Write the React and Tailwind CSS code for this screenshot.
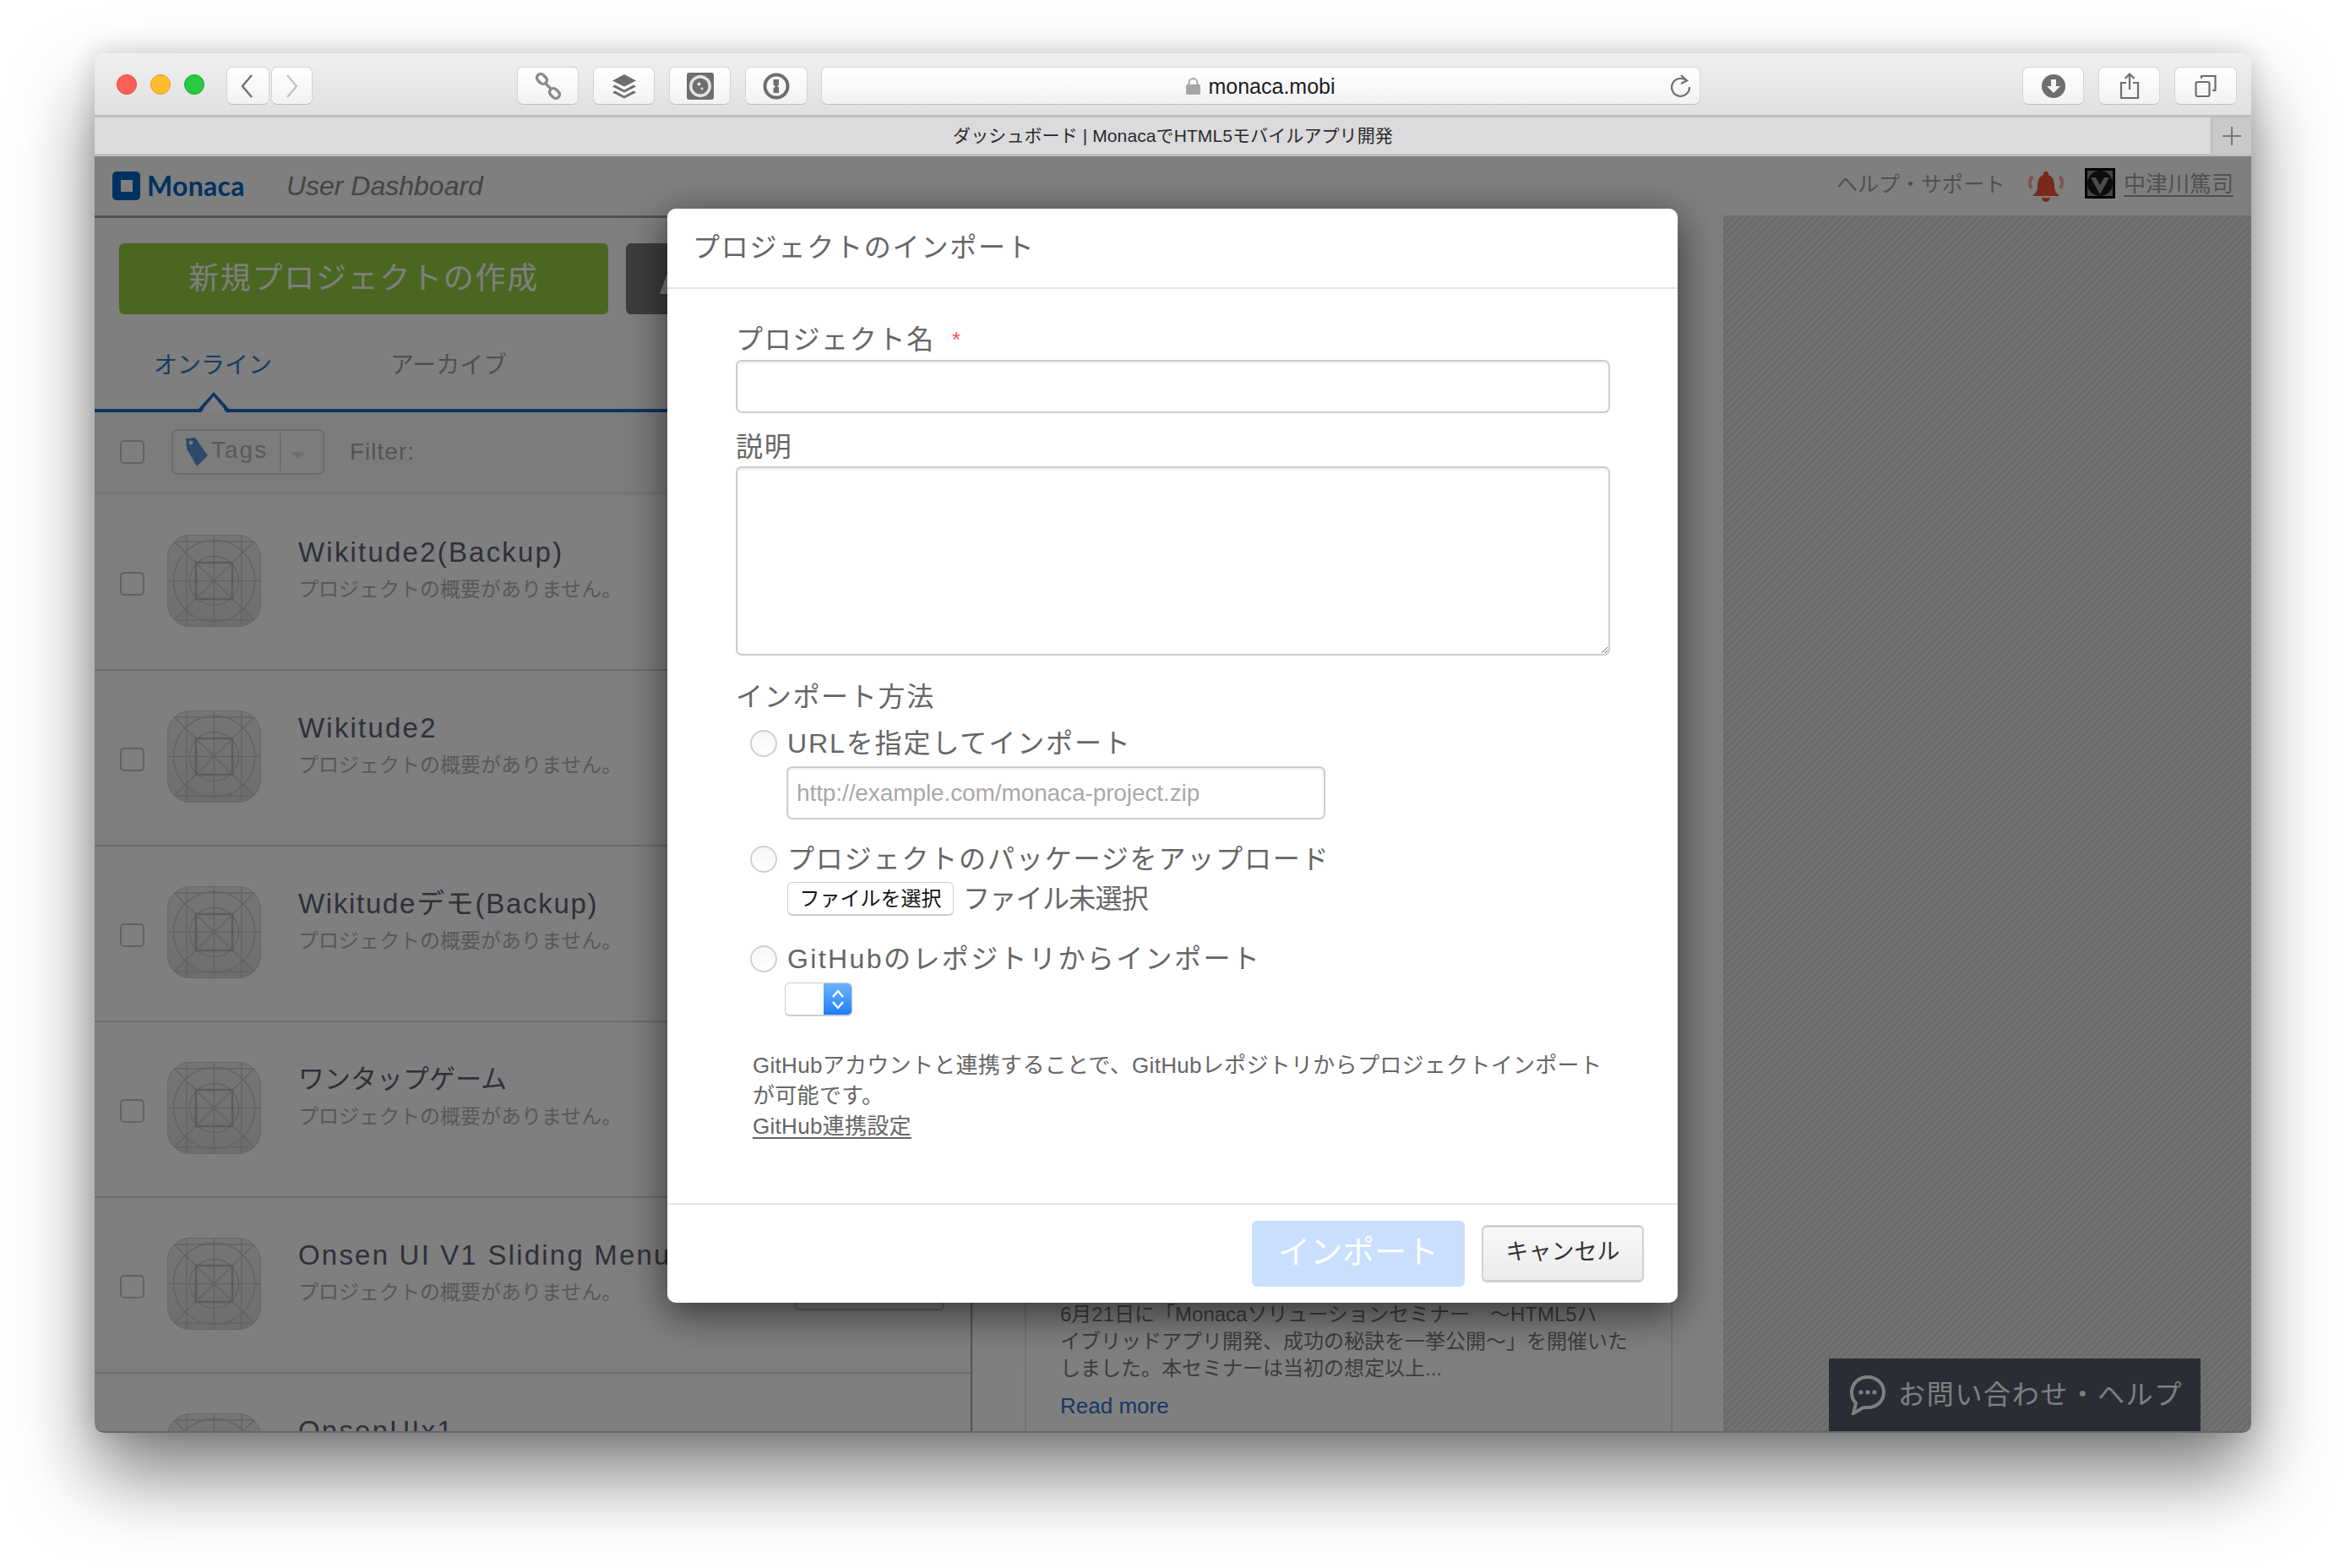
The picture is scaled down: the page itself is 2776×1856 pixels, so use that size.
import React from "react";

const projects = [
  { name: "Wikitude2(Backup)", title: "text-[33px] tracking-[2.2px]" },
  { name: "Wikitude2", title: "text-[33px] tracking-[2.2px]" },
  { name: "Wikitudeデモ(Backup)", title: "text-[33px] tracking-[1.7px]" },
  { name: "ワンタップゲーム", title: "text-[31px]" },
  { name: "Onsen UI V1 Sliding Menu", title: "text-[33px] tracking-[2.2px]" },
  { name: "OnsenUIx1", title: "text-[33px] tracking-[2.2px]" },
];

const sans = "font-['Liberation_Sans','Noto_Sans_CJK_JP',sans-serif]";
const toolBtn =
  "flex items-center justify-center h-[45px] rounded-[7px] border border-[#d4d3d5] border-b-[#bdbcbe] bg-gradient-to-b from-white to-[#f2f2f3]";
const field = "rounded-[7px] border-2 border-[#cccccc] bg-white shadow-[inset_0_2px_3px_rgba(0,0,0,0.07)]";

const ProjectIcon = () => (
  <svg width="111" height="109" viewBox="0 0 111 109" className="shrink-0">
    <defs>
      <linearGradient id="iconFill" x1="0" y1="0" x2="0" y2="1">
        <stop offset="0" stopColor="#ececec" />
        <stop offset="1" stopColor="#dcdcdc" />
      </linearGradient>
      <clipPath id="iconClip">
        <rect width="111" height="109" rx="27" />
      </clipPath>
    </defs>
    <rect width="111" height="109" rx="27" fill="url(#iconFill)" />
    <g clipPath="url(#iconClip)" fill="none" stroke="#c6c6c6" strokeWidth="1.5">
      <path d="M0 0L111 109M111 0L0 109M55.5 0V109M0 54.5H111M23 0V109M88 0V109M0 8H111M0 101H111" />
      <circle cx="55.5" cy="54.5" r="48" />
      <circle cx="55.5" cy="54.5" r="29" />
      <rect x="34" y="33" width="43" height="43" strokeWidth="2.5" stroke="#b8b8b8" />
    </g>
    <rect x="0.5" y="0.5" width="110" height="108" rx="27" fill="none" stroke="#cccccc" />
  </svg>
);

const Checkbox = () => (
  <div className="w-[29px] h-[28px] shrink-0 rounded-[5px] border-2 border-[#c4c4c4] bg-white" />
);

const Radio = () => (
  <input
    type="radio"
    name="method"
    className="appearance-none w-[32px] h-[32px] shrink-0 rounded-full border-2 border-[#cfcfcf] bg-gradient-to-b from-[#f6f6f6] to-white"
  />
);

const ProjectRow = ({ name, title }) => (
  <div className="flex items-center h-[208px] shrink-0 border-b-2 border-[#d8d8d8] pl-[30px] pr-[31px]">
    <div className="mt-[4px]">
      <Checkbox />
    </div>
    <div className="ml-[27px] -mt-[4px]">
      <ProjectIcon />
    </div>
    <div className="ml-[44px] pb-[30px] min-w-0 whitespace-nowrap">
      <div className={`${title} leading-[44px] text-[#5c6270]`}>{name}</div>
      <div className="text-[24px] leading-[36px] mt-[4px] text-[#b0b0b0]">プロジェクトの概要がありません。</div>
    </div>
    <div className="ml-auto w-[177px] h-[60px] shrink-0 rounded-[6px] border-2 border-[#c8c8c8]" />
  </div>
);

export default function App() {
  return (
    <div className={`w-[2776px] h-[1856px] bg-white pl-[112px] pt-[63px] overflow-hidden ${sans}`}>
      <div className="w-[2553px] h-[1633px] flex flex-col rounded-t-[12px] rounded-b-[10px] overflow-hidden shadow-[0_50px_90px_rgba(0,0,0,0.5),0_0_30px_rgba(0,0,0,0.16)]">
        {/* toolbar */}
        <div className="h-[76px] shrink-0 flex items-start pt-[16px] pl-[26px] bg-gradient-to-b from-[#f0eff1] to-[#e0dfe1] border-b-[3px] border-[#bfbec0]">
          <div className="flex gap-[16px] mt-[9px]">
            <div className="w-[24px] h-[24px] rounded-full bg-[#ff5f57] border border-[#e2463f]" />
            <div className="w-[24px] h-[24px] rounded-full bg-[#ffbd2e] border border-[#e1a116]" />
            <div className="w-[24px] h-[24px] rounded-full bg-[#28c940] border border-[#14ae2c]" />
          </div>
          <div className={`${toolBtn} w-[51px] ml-[26px]`}>
            <svg width="16" height="30" viewBox="0 0 16 30" fill="none" stroke="#6e6e6e" strokeWidth="2.4" className="mr-[4px]">
              <path d="M14 2L3 15L14 28" />
            </svg>
          </div>
          <div className={`${toolBtn} w-[49px] ml-[2px]`}>
            <svg width="16" height="30" viewBox="0 0 16 30" fill="none" stroke="#c4c4c4" strokeWidth="2.4">
              <path d="M2 2L13 15L2 28" />
            </svg>
          </div>
          <div className={`${toolBtn} w-[73px] ml-[242px]`}>
            <svg width="32" height="32" viewBox="0 0 32 32" fill="none" stroke="#8a8a8a" strokeWidth="3.4">
              <rect x="2" y="3" width="13" height="9" rx="4.5" transform="rotate(45 8.5 7.5)" />
              <rect x="17" y="20" width="13" height="9" rx="4.5" transform="rotate(45 23.5 24.5)" />
              <path d="M12 12L20 20" />
            </svg>
          </div>
          <div className={`${toolBtn} w-[73px] ml-[17px]`}>
            <svg width="30" height="30" viewBox="0 0 30 30" fill="#6e6e6e">
              <path d="M15 1L29 8.5L15 15.5L1 8.5Z" />
              <path d="M4 13.5L15 19.5L26 13.5L29 15.5L15 22.5L1 15.5Z" />
              <path d="M4 20.5L15 26.5L26 20.5L29 22.5L15 29.5L1 22.5Z" />
            </svg>
          </div>
          <div className={`${toolBtn} w-[73px] ml-[17px]`}>
            <svg width="32" height="32" viewBox="0 0 32 32">
              <rect width="32" height="32" rx="3" fill="#6e6e6e" />
              <circle cx="16" cy="16" r="13" fill="#e4e4e4" />
              <circle cx="16" cy="16" r="9.5" fill="#6e6e6e" />
              <circle cx="14.5" cy="13.5" r="2" fill="#e4e4e4" />
              <circle cx="18" cy="19" r="1.4" fill="#e4e4e4" />
            </svg>
          </div>
          <div className={`${toolBtn} w-[74px] ml-[17px]`}>
            <svg width="32" height="32" viewBox="0 0 32 32">
              <circle cx="16" cy="16" r="13.5" fill="none" stroke="#6e6e6e" strokeWidth="4" />
              <path d="M12.5 8H19V14.5L17 16L19 17.5V24H12.5V18.5L15 16.5L12.5 14.5Z" fill="#6e6e6e" />
            </svg>
          </div>
          <div className="relative flex items-center justify-center w-[1041px] h-[45px] ml-[16px] rounded-[7px] border border-[#d4d3d5] border-b-[#bdbcbe] bg-gradient-to-b from-white to-[#f2f2f3]">
            <svg width="17" height="20" viewBox="0 0 17 20" className="mr-[9px]">
              <path d="M3.5 9V6a5 5 0 0 1 10 0v3" fill="none" stroke="#a6a6a6" strokeWidth="2" />
              <rect y="8" width="17" height="12" rx="1.5" fill="#a6a6a6" />
            </svg>
            <span className="text-[25px] text-[#1c1c1c] mt-[2px]">monaca.mobi</span>
            <svg width="28" height="28" viewBox="0 0 28 28" fill="none" stroke="#6e6e6e" strokeWidth="2.2" className="absolute right-[9px] top-[8px]">
              <path d="M21.5 7.5A10.5 10.5 0 1 0 25 15" />
              <path d="M15 1L22 7.5L15 11" />
            </svg>
          </div>
          <div className={`${toolBtn} w-[73px] ml-[381px]`}>
            <svg width="28" height="28" viewBox="0 0 28 28">
              <circle cx="14" cy="14" r="14" fill="#6e6e6e" />
              <path d="M11 6H17V14H22L14 22L6 14H11Z" fill="#f4f4f4" />
            </svg>
          </div>
          <div className={`${toolBtn} w-[73px] ml-[17px]`}>
            <svg width="24" height="32" viewBox="0 0 24 32" fill="none" stroke="#6e6e6e" strokeWidth="2.2">
              <path d="M8 12H2V30H22V12H16" />
              <path d="M12 20V2M6.5 7L12 1.5L17.5 7" />
            </svg>
          </div>
          <div className={`${toolBtn} w-[74px] ml-[17px]`}>
            <svg width="26" height="28" viewBox="0 0 26 28" fill="none" stroke="#6e6e6e" strokeWidth="2.2">
              <rect x="1.5" y="9" width="16" height="17" rx="2" />
              <path d="M8 5V2H24.5V19H21" />
            </svg>
          </div>
        </div>

        {/* tab bar */}
        <div className="relative h-[46px] shrink-0 flex items-center justify-center bg-[#dbdadc] border-b-[3px] border-[#bfbec0]">
          <span className="text-[21px] tracking-[0.1px] text-[#2a2a2a] mt-[1px]">ダッシュボード | MonacaでHTML5モバイルアプリ開発</span>
          <div className="absolute right-0 top-0 bottom-0 w-[48px] flex items-center justify-center bg-[#c9c8ca] border-l-2 border-[#bfbec0]">
            <svg width="24" height="24" viewBox="0 0 24 24" stroke="#7a7a7a" strokeWidth="2">
              <path d="M12 1V23M1 12H23" />
            </svg>
          </div>
        </div>

        {/* page under the dialog */}
        <div className="relative flex-1 flex flex-col min-h-0 bg-white border-b-2 border-[#666666]">
          <div className="h-[70px] shrink-0 flex items-center pl-[21px] pr-[21px]">
            <div className="w-[33px] h-[34px] rounded-[5px] bg-[#0064be] flex items-center justify-center">
              <div className="w-[14px] h-[14px] bg-white" />
            </div>
            <span className="ml-[8px] text-[32px] tracking-[0.3px] font-bold text-[#0064be] font-['Lato',sans-serif]">Monaca</span>
            <span className="ml-[49px] text-[32px] italic text-[#888888]">User Dashboard</span>
            <div className="ml-auto flex items-center -mt-[3px]">
              <span className="text-[25px] text-[#a0a0a0]">ヘルプ・サポート</span>
              <svg width="44" height="38" viewBox="0 0 44 38" className="ml-[26px] mt-[6px]">
                <path d="M22 0a3 3 0 0 1 3 4c6 2 7 8 7 13c0 6 3 9 6 12H6c3-3 6-6 6-12c0-5 1-11 7-13a3 3 0 0 1 3-4Z" fill="#f4553a" />
                <path d="M17 31H27A5 5 0 0 1 17 31Z" fill="#f4553a" />
                <path d="M6 6C2 10 2 16 5 20M38 6C42 10 42 16 39 20" fill="none" stroke="#f4553a" strokeWidth="4" opacity="0.5" />
              </svg>
              <div className="ml-[24px] w-[36px] h-[36px] border-[3px] border-black bg-[#888] overflow-hidden -mt-[4px]">
                <svg width="30" height="30" viewBox="0 0 30 30">
                  <circle cx="15" cy="15" r="15" fill="#1a1a1a" />
                  <path d="M4 8L15 28L26 8L20 8L15 17L10 8Z" fill="#999" />
                </svg>
              </div>
              <a className="ml-[10px] text-[26px] text-[#a0a0a0] underline underline-offset-4">中津川篤司</a>
            </div>
          </div>

          <div className="flex-1 flex min-h-0">
            {/* project list */}
            <div className="w-[1039px] shrink-0 flex flex-col overflow-hidden border-t-[3px] border-t-[#a0a0a0] border-r-2 border-r-[#a8a8a8]">
              <div className="flex gap-[21px] pt-[30px] pl-[29px] shrink-0">
                <div className="w-[579px] h-[84px] rounded-[6px] bg-[#94ce44] flex items-center justify-center text-[36px] tracking-[1.7px] text-white">
                  新規プロジェクトの作成
                </div>
                <div className="w-[200px] h-[84px] rounded-[6px] bg-[#7a7a7a] pl-[40px] pt-[30px]">
                  <svg width="20" height="30" viewBox="0 0 20 30">
                    <path d="M11 0L20 14V30H0Z" fill="#ffffff" />
                  </svg>
                </div>
              </div>
              <div className="relative h-[116px] shrink-0 flex border-b-[4px] border-[#1a6ac0] pl-[70px] pt-[41px] text-[28px] leading-[40px]">
                <span className="text-[#3474cc]">オンライン</span>
                <span className="ml-[140px] text-[#a0a0a0]">アーカイブ</span>
                <svg width="44" height="24" viewBox="0 0 44 24" className="absolute left-[119px] bottom-[-4px]">
                  <path d="M0 24H6L22 5L38 24H44V20H40L22 0L4 20H0Z" fill="#1a6ac0" />
                  <path d="M7 24L22 7L37 24Z" fill="#ffffff" />
                </svg>
              </div>
              <div className="h-[98px] shrink-0 flex items-center pl-[30px] border-b-4 border-[#eeeeee] bg-[#f8f8f8]">
                <Checkbox />
                <div className="ml-[32px] w-[181px] h-[54px] flex items-center rounded-[7px] border-2 border-[#d8d8d8]">
                  <svg width="28" height="36" viewBox="0 0 28 36" className="ml-[14px]">
                    <path d="M1 2L12 1L27 22L14 35L2 14Z" fill="#5f93d6" />
                    <circle cx="7" cy="7" r="2.4" fill="#eeeeee" />
                  </svg>
                  <span className="ml-[3px] text-[28px] tracking-[2px] text-[#b4b4b4] -mt-[5px]">Tags</span>
                  <div className="ml-[14px] w-[2px] h-[46px] bg-[#d8d8d8]" />
                  <div className="ml-[11px] mt-[8px] w-0 h-0 border-x-[9px] border-x-transparent border-t-[9px] border-t-[#dcdcdc]" />
                </div>
                <span className="ml-[30px] text-[28px] tracking-[1px] text-[#a8a8a8]">Filter:</span>
              </div>
              {projects.map((p) => (
                <ProjectRow key={p.name} name={p.name} title={p.title} />
              ))}
            </div>

            {/* news */}
            <div className="w-[889px] shrink-0 pl-[62px] pr-[60px]">
              <div className="h-full flex flex-col justify-end pb-[12px] pl-[40px] border-x-2 border-[#e4e4e4]">
                <p className="text-[24px] leading-[32px] text-[#7a7a7a] whitespace-nowrap">
                  6月21日に「Monacaソリューションセミナー　～HTML5ハ
                  <br />
                  イブリッドアプリ開発、成功の秘訣を一挙公開～」を開催いた
                  <br />
                  しました。本セミナーは当初の想定以上...
                </p>
                <a className="mt-[10px] text-[26px] leading-[36px] text-[#2a6fd0]">Read more</a>
              </div>
            </div>

            <div className="flex-1 bg-[repeating-linear-gradient(135deg,#e4e4e4_0px,#e4e4e4_3px,#d6d6d6_3px,#d6d6d6_6px)]" />
          </div>

          <div className="absolute right-[60px] bottom-0 w-[440px] h-[86px] flex items-center pl-[24px] bg-[#545a6a]">
            <svg width="44" height="48" viewBox="0 0 44 48">
              <path d="M22 3C11 3 3 11 3 21C3 27 5 31 8 34L5 46L17 39C18 39 20 39 22 39C33 39 41 31 41 21C41 11 33 3 22 3Z" fill="none" stroke="#ffffff" strokeWidth="4" />
              <circle cx="14" cy="21" r="2.6" fill="#ffffff" />
              <circle cx="22" cy="21" r="2.6" fill="#ffffff" />
              <circle cx="30" cy="21" r="2.6" fill="#ffffff" />
            </svg>
            <span className="ml-[14px] text-[32px] tracking-[1.7px] text-white">お問い合わせ・ヘルプ</span>
          </div>

          {/* overlay */}
          <div className="absolute inset-0 bg-black/50" />

          {/* dialog */}
          <div className="absolute left-[678px] top-[62px] w-[1196px] h-[1295px] flex flex-col bg-white rounded-[10px] shadow-[0_12px_48px_rgba(0,0,0,0.6)] text-[#666666]">
            <div className="h-[95px] shrink-0 flex items-center pl-[30px] pb-[2px] border-b-2 border-[#e5e5e5] text-[32px] tracking-[1.8px]">
              プロジェクトのインポート
            </div>
            <div className="flex-1 flex flex-col items-start pl-[81px] pt-[40px] text-[32px] leading-[40px]">
              <label className="tracking-[1.7px]">
                プロジェクト名<span className="ml-[20px] text-[26px] text-[#f55] align-top">*</span>
              </label>
              <input className={`mt-[4px] w-[1035px] h-[63px] ${field}`} />
              <label className="mt-[20px] tracking-[1.7px]">説明</label>
              <textarea className={`mt-[3px] w-[1035px] h-[224px] ${field}`} />
              <label className="mt-[29px] tracking-[1.7px]">インポート方法</label>
              <div className="mt-[15px] ml-[17px] flex items-center gap-[12px]">
                <Radio />
                <span className="tracking-[1.9px]">URLを指定してインポート</span>
              </div>
              <input
                placeholder="http://example.com/monaca-project.zip"
                className={`mt-[7px] ml-[60px] w-[638px] h-[63px] pl-[10px] text-[28px] tracking-[-0.1px] placeholder:text-[#a9a9a9] ${field}`}
              />
              <div className="mt-[27px] ml-[17px] flex items-center gap-[12px]">
                <Radio />
                <span className="tracking-[1.85px]">プロジェクトのパッケージをアップロード</span>
              </div>
              <div className="mt-[7px] ml-[61px] flex items-center">
                <button className="w-[197px] h-[40px] rounded-[6px] border border-[#cccccc] border-b-2 bg-white text-[24px] leading-[36px] text-[#111111]">
                  ファイルを選択
                </button>
                <span className="ml-[11px] tracking-[-0.7px]">ファイル未選択</span>
              </div>
              <div className="mt-[31px] ml-[17px] flex items-center gap-[12px]">
                <Radio />
                <span className="tracking-[2.4px]">GitHubのレポジトリからインポート</span>
              </div>
              <div className="mt-[8px] ml-[58px] w-[80px] h-[40px] flex rounded-[6px] border border-[#cccccc] border-b-2 overflow-hidden bg-white">
                <div className="flex-1" />
                <div className="w-[33px] flex items-center justify-center bg-gradient-to-b from-[#6db3fb] to-[#1a7efb]">
                  <svg width="18" height="30" viewBox="0 0 18 30" fill="none" stroke="#ffffff" strokeWidth="2.4">
                    <path d="M3 12L9 5L15 12M3 18L9 25L15 18" />
                  </svg>
                </div>
              </div>
              <p className="mt-[40px] ml-[20px] text-[26px] leading-[36px] tracking-[0.3px] whitespace-nowrap">
                GitHubアカウントと連携することで、GitHubレポジトリからプロジェクトインポート
                <br />
                が可能です。
                <br />
                <a className="underline underline-offset-4">GitHub連携設定</a>
              </p>
            </div>
            <div className="h-[118px] shrink-0 flex items-center justify-end gap-[20px] pr-[40px] border-t-2 border-[#e5e5e5]">
              <button className="w-[252px] h-[78px] pb-[3px] rounded-[6px] bg-[#c9dffd] text-[38px] text-white">インポート</button>
              <button className="w-[192px] h-[68px] pb-[3px] rounded-[6px] border-2 border-[#cfcfcf] border-y-[3px] bg-gradient-to-b from-[#f8f8f8] to-[#ebebeb] text-[27px] text-[#333333]">
                キャンセル
              </button>
            </div>
          </div>
        </div>
      </div>
    </div>
  );
}
